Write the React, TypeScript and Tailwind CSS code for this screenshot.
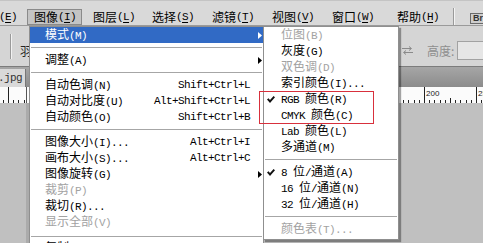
import React from "react";

const cjk = "font-['Noto_Sans_CJK_SC',sans-serif]";
const mono = "font-['Liberation_Mono',monospace] text-[11px] tracking-[-0.6px]";

// splits a label into CJK and ASCII runs, ASCII gets the narrow mono face
function T({ s }: { s: string }) {
  const parts = s.split(/([\x20-\x7e]+)/);
  return (
    <>
      {parts.map((p, i) =>
        p === "" ? null : i % 2 ? (
          <span key={i} className={`${mono} whitespace-pre`}>
            {p}
          </span>
        ) : (
          <span key={i}>{p}</span>
        )
      )}
    </>
  );
}

const bar = [
  { label: "编辑", k: "E", w: "w-[55px] ml-[-32px]" },
  { label: "图像", k: "I", w: "w-[55px] ml-[4px]", on: true },
  { label: "图层", k: "L", w: "w-[55px] ml-[4px]" },
  { label: "选择", k: "S", w: "w-[56px] ml-[4px]" },
  { label: "滤镜", k: "T", w: "w-[56px] ml-[4px]" },
  { label: "视图", k: "V", w: "w-[56px] ml-[4px]" },
  { label: "窗口", k: "W", w: "w-[61px] ml-[4px]" },
  { label: "帮助", k: "H", w: "w-[50px] ml-[4px]" },
];

function MenuBar() {
  return (
    <div className="flex h-[26px] shrink-0 items-start border-t border-b border-t-[#c4c4c4] border-b-[#9a9a9a] bg-[#d9d9d9] pt-[8px]">
      {bar.map((m) => (
        <div
          key={m.k}
          className={`flex h-[16px] shrink-0 items-center ${m.w} ${
            m.on ? "border border-[#8a8a8a] bg-[#c4c4c4] pl-[6px]" : "pl-[7px]"
          }`}
        >
          {m.label}
          <span className={mono}>
            (<span className="underline underline-offset-2">{m.k}</span>)
          </span>
        </div>
      ))}
      <div className="ml-[13px] -mt-[1px] flex h-[17px] w-[2px] shrink-0">
        <div className="w-px bg-[#9a9a9a]" />
        <div className="w-px bg-[#f4f4f4]" />
      </div>
      <div className="ml-[15px] mt-[4px] flex h-[11px] w-[30px] shrink-0 items-center border border-[#6a6a6a] bg-[#cdcdcd] pl-[2px] font-['Liberation_Sans',sans-serif] text-[9px] font-bold text-[#333]">
        Br
      </div>
    </div>
  );
}

function Toolbar() {
  return (
    <div className="flex h-[41px] shrink-0 items-center border-b border-[#7c7c7c] bg-[#d5d5d5]">
      <div className="ml-[10px] flex h-[25px] w-[2px]">
        <div className="w-px bg-[#9a9a9a]" />
        <div className="w-px bg-[#f2f2f2]" />
      </div>
      <span className="ml-[8px] mt-[9px] text-[#222]">羽化</span>
      <div className="ml-auto -mr-[14px] mt-[9px] flex items-center">
        <svg width="11" height="9" viewBox="0 0 11 9" className="text-[#8a8a8a]">
          <path d="M0 2.5H9M7 0.5L9.5 2.5L7 4.5M11 6.5H2M4 4.5L1.5 6.5L4 8.5" fill="none" stroke="currentColor" strokeWidth="1" />
        </svg>
        <span className="ml-[14px] w-[28px] whitespace-nowrap text-[#8e8e8e]">高度:</span>
        <div className="ml-[2px] h-[19px] w-[40px] border border-[#a2a2a2] bg-[#e6e6e6]" />
      </div>
    </div>
  );
}

function TabBar() {
  return (
    <div className="flex h-[20px] shrink-0 bg-gradient-to-b from-[#a6a6a6] to-[#8c8c8c]">
      <div className="mt-[2px] flex w-[26px] items-center justify-end overflow-hidden whitespace-nowrap border-r border-[#777] bg-[#d9d9d9] pr-[3px] text-[#333]">
        <T s="未标题.jpg" />
      </div>
    </div>
  );
}

function Ruler() {
  const ticks = [];
  for (let i = -82; i <= 12; i++) {
    const x = Math.round(424 + i * 5.2) + 0.5;
    if (x < 0 || x > 483) continue;
    const h = i % 10 === 0 ? 16 : i % 5 === 0 ? 5 : 3;
    ticks.push(<line key={i} x1={x} x2={x} y1={16 - h} y2={16} stroke="#222" strokeWidth="1" />);
  }
  return (
    <div className="h-[16px] shrink-0 bg-[#fbfbfb]">
      <svg width="483" height="16" viewBox="0 0 483 16">
        {ticks}
        <line x1="26.5" x2="26.5" y1="0" y2="16" stroke="#555" />
        <text x="426" y="9" fontSize="8" fontFamily="Liberation Sans, sans-serif" fill="#222">200</text>
        <text x="478" y="9" fontSize="8" fontFamily="Liberation Sans, sans-serif" fill="#222">250</text>
      </svg>
    </div>
  );
}

function Arrow() {
  return (
    <svg width="4" height="7" viewBox="0 0 4 7">
      <polygon points="0,0 4,3.5 0,7" fill="currentColor" />
    </svg>
  );
}

function Check() {
  return (
    <svg width="8" height="7" viewBox="0 0 8 7">
      <polygon points="0,3.5 1.5,2.2 3,4 6.6,0 8,1.3 3,7" fill="#111" />
    </svg>
  );
}

type Item = { t?: string; key?: string; off?: boolean; on?: boolean; sub?: boolean; check?: boolean; sep?: boolean; tall?: boolean };

const main: Item[] = [
  { t: "模式(M)", sub: true, on: true },
  { sep: true },
  { t: "调整(A)", sub: true },
  { sep: true },
  { t: "自动色调(N)", key: "Shift+Ctrl+L" },
  { t: "自动对比度(U)", key: "Alt+Shift+Ctrl+L" },
  { t: "自动颜色(O)", key: "Shift+Ctrl+B" },
  { sep: true },
  { t: "图像大小(I)...", key: "Alt+Ctrl+I" },
  { t: "画布大小(S)...", key: "Alt+Ctrl+C" },
  { t: "图像旋转(G)", sub: true },
  { t: "裁剪(P)", off: true },
  { t: "裁切(R)..." },
  { t: "显示全部(V)", off: true },
  { sep: true, tall: true },
  { t: "复制(D)..." },
];

const modes: Item[] = [
  { t: "位图(B)", off: true },
  { t: "灰度(G)" },
  { t: "双色调(D)", off: true },
  { t: "索引颜色(I)..." },
  { t: "RGB 颜色(R)", check: true },
  { t: "CMYK 颜色(C)" },
  { t: "Lab 颜色(L)" },
  { t: "多通道(M)" },
  { sep: true },
  { t: "8 位/通道(A)", check: true },
  { t: "16 位/通道(N)" },
  { t: "32 位/通道(H)" },
  { sep: true },
  { t: "颜色表(T)...", off: true },
];

function Sep({ tall }: { tall?: boolean }) {
  return (
    <div className={`flex items-center px-[1px] ${tall ? "h-[10px] pt-[2px]" : "h-[9px]"}`}>
      <div className="h-px w-full bg-[#a6a6a6]" />
    </div>
  );
}

function MainMenu() {
  return (
    <div className="absolute left-[29px] top-[26px] w-[235px] border border-[#8f8f8f] bg-white">
      {main.map((m, i) =>
        m.sep ? (
          <Sep key={i} tall={m.tall} />
        ) : (
          <div
            key={i}
            className={`flex h-[16px] items-center pl-[15px] ${
              m.on ? "bg-[#316ac5] text-white" : m.off ? "text-[#a2a2a2]" : "text-black"
            }`}
          >
            <span className="flex-1 whitespace-nowrap">
              <T s={m.t!} />
            </span>
            {m.key && <span className={`${mono} whitespace-nowrap`}>{m.key}</span>}
            <span className="flex w-[13px] justify-end pr-[1px]">{m.sub && <Arrow />}</span>
          </div>
        )
      )}
    </div>
  );
}

function SubMenu() {
  return (
    <div className="absolute left-[263px] top-[26px] w-[136px] border border-[#8f8f8f] bg-white pb-[2px] shadow-[2px_2px_1px_rgba(0,0,0,0.35)]">
      {modes.map((m, i) =>
        m.sep ? (
          <Sep key={i} />
        ) : (
          <div key={i} className={`flex h-[16px] items-center ${m.off ? "text-[#a2a2a2]" : "text-black"}`}>
            <span className="flex w-[17px] pl-[3px]">{m.check && <Check />}</span>
            <span className="whitespace-nowrap">
              <T s={m.t!} />
            </span>
          </div>
        )
      )}
    </div>
  );
}

export default function App() {
  return (
    <div className={`relative h-[243px] w-[483px] overflow-hidden bg-[#c0c0c0] text-[12px] leading-none text-black ${cjk}`}>
      <div className="flex h-full flex-col">
        <MenuBar />
        <Toolbar />
        <TabBar />
        <Ruler />
        <div className="flex flex-1">
          <div className="w-[26px] bg-[#c0c0c0]" />
          <div className="w-[3px] bg-[#ababab]" />
          <div className="flex-1 bg-[#c0c0c0]" />
        </div>
      </div>
      <MainMenu />
      <SubMenu />
      {/* annotation frame */}
      <div className="absolute left-[259px] top-[91px] h-[33px] w-[115px] shadow-[inset_0_0_0_1px_#d8303c]" />
    </div>
  );
}
